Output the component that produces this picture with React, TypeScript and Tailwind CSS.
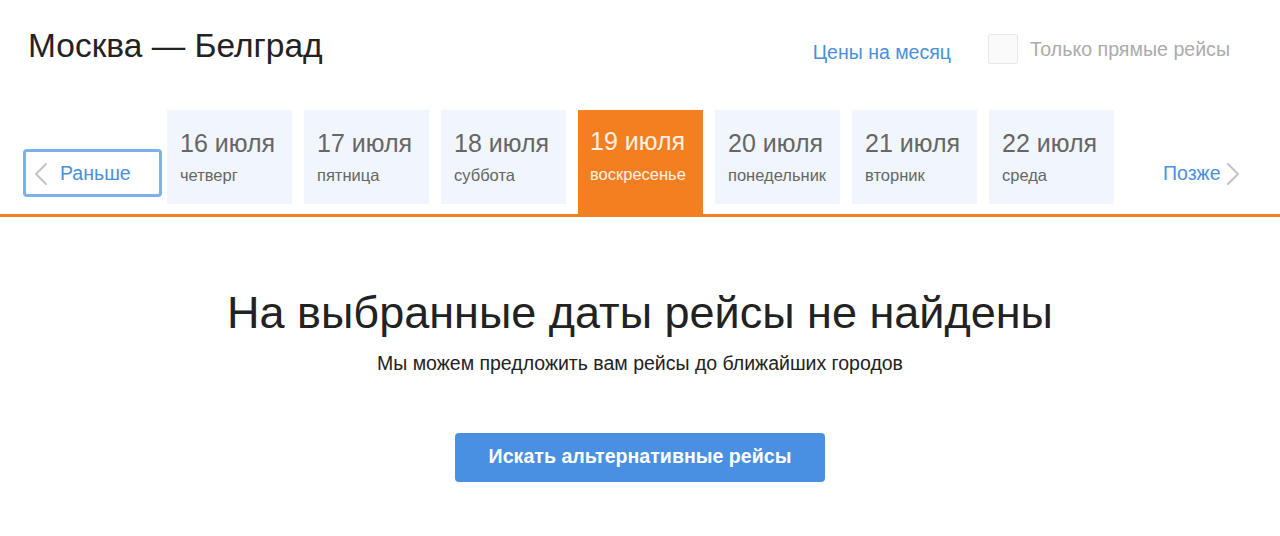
const days = [
  { date: "16 июля", day: "четверг" },
  { date: "17 июля", day: "пятница" },
  { date: "18 июля", day: "суббота" },
  { date: "19 июля", day: "воскресенье", active: true },
  { date: "20 июля", day: "понедельник" },
  { date: "21 июля", day: "вторник" },
  { date: "22 июля", day: "среда" },
];

function Chevron({ dir }: { dir: "left" | "right" }) {
  return (
    <svg width="14" height="22" viewBox="0 0 14 22" fill="none" className="shrink-0">
      <polyline
        points={dir === "left" ? "12,1 2,11 12,21" : "2,1 12,11 2,21"}
        stroke="#c4c4c4"
        strokeWidth="2"
        strokeLinecap="round"
        strokeLinejoin="round"
      />
    </svg>
  );
}

export default function App() {
  return (
    <div className="h-[536px] w-[1280px] overflow-hidden bg-white font-['Liberation_Sans',Arial,sans-serif]">
      {/* header */}
      <header className="flex h-[110px] items-start pl-[28px] pr-[50px]">
        <h1 className="mt-[29px] text-[33.5px] leading-none text-[#222]">Москва — Белград</h1>
        <a className="ml-auto mt-[43px] text-[19.5px] leading-none text-[#4a8fdb]">Цены на месяц</a>
        <label className="ml-[37px] mt-[34px] flex items-center gap-[12px]">
          <span className="h-[30px] w-[30px] rounded-[2px] border border-[#e8e8e8] bg-[#fafafa]" />
          <span className="pt-[1px] text-[19.6px] leading-none text-[#ababab]">Только прямые рейсы</span>
        </label>
      </header>

      {/* date strip */}
      <div className="flex items-start pl-[23px]">
        <button className="mt-[39px] flex h-[48px] w-[139px] items-center gap-[12px] rounded-[4px] border-[3px] border-[#7fb0ee] pl-[8px] pt-[2px] text-[19.5px] text-[#4a8fdb]">
          <Chevron dir="left" />
          Раньше
        </button>
        <div className="ml-[5px] flex gap-[12px]">
          {days.map((d) =>
            d.active ? (
              <div
                key={d.date}
                className="h-[104px] w-[125px] overflow-hidden whitespace-nowrap bg-[#f47f20] pl-[12px] pt-[19px] text-[#fdf1e6]"
              >
                <div className="text-[25px] leading-none">{d.date}</div>
                <div className="mt-[12px] text-[16.5px] leading-none">{d.day}</div>
              </div>
            ) : (
              <div
                key={d.date}
                className="h-[94px] w-[125px] overflow-hidden whitespace-nowrap bg-[#f1f6fd] pl-[13px] pt-[21px] text-[#666]"
              >
                <div className="text-[25px] leading-none">{d.date}</div>
                <div className="mt-[11px] text-[16.5px] leading-none">{d.day}</div>
              </div>
            )
          )}
        </div>
        <button className="ml-[49px] mt-[49px] flex items-center gap-[6px] text-[19.5px] text-[#4a8fdb]">
          Позже
          <Chevron dir="right" />
        </button>
      </div>
      <div className="h-[3px] w-full bg-[#f47f20]" />

      {/* empty state */}
      <section className="flex flex-col items-center">
        <h2 className="mt-[73px] text-[45px] leading-none text-[#222]">На выбранные даты рейсы не найдены</h2>
        <p className="mt-[19px] text-[19.5px] leading-none text-[#222]">
          Мы можем предложить вам рейсы до ближайших городов
        </p>
        <button className="mt-[59px] h-[49px] w-[370px] rounded-[4px] bg-[#4a90e2] text-[19.6px] font-bold text-white">
          Искать альтернативные рейсы
        </button>
      </section>
    </div>
  );
}
